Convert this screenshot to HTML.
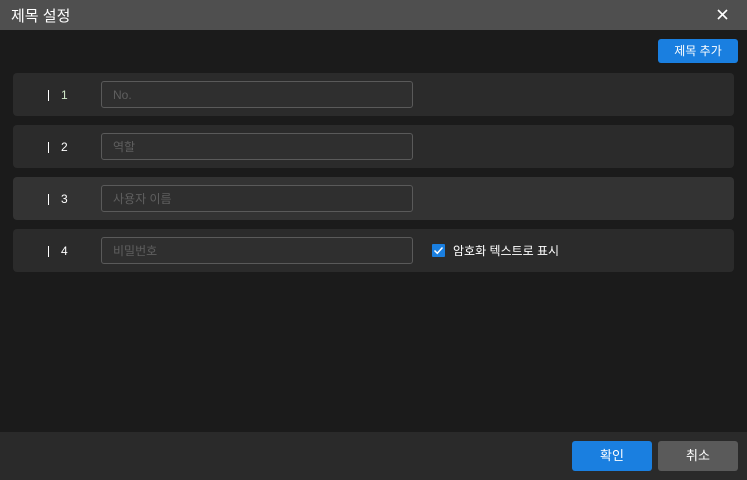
<!DOCTYPE html>
<html><head><meta charset="utf-8"><style>
*{margin:0;padding:0;box-sizing:border-box}
body{width:747px;height:480px;background:#1b1b1b;font-family:"Liberation Sans","Noto Sans CJK KR",sans-serif;position:relative;overflow:hidden;color:#fff}
.title{position:absolute;left:0;top:0;width:747px;height:30px;background:#4f4f4f}
.title span{position:absolute;left:11px;top:5px;font-size:15px;color:#fff}
.x{position:absolute;left:717px;top:9px}
.add{position:absolute;left:658px;top:39px;width:80px;height:24px;background:#1a7fe0;border-radius:3px;font-size:12px;text-align:center;line-height:24px}
.row{position:absolute;left:13px;width:721px;height:43px;background:#2b2b2b;border-radius:4px}
.row.hl{background:#333}
.bar{position:absolute;left:35px;top:17px;width:1px;height:11px;background:#fff}
.num{position:absolute;left:48px;top:15px;font-size:12px;color:#fff}
.inp{position:absolute;left:88px;top:8px;width:312px;height:27px;border:1px solid #5a5a5a;border-radius:3px;background:#2f2f2f;font-size:12px;color:#5f5f5f;padding-left:11px;line-height:27px}
.chk{position:absolute;left:419px;top:15px;width:13px;height:13px;background:#1a7fe0;border-radius:1px}
.lbl{position:absolute;left:440px;top:13px;font-size:12px}
.footer{position:absolute;left:0;top:432px;width:747px;height:48px;background:#2a2a2a}
.btn{position:absolute;top:441px;width:80px;height:30px;border-radius:3px;font-size:13px;text-align:center;line-height:30px}
</style></head><body>
<div class="title"><span>제목 설정</span>
<svg class="x" width="11" height="11" viewBox="0 0 11 11"><path d="M1 1L10 10M10 1L1 10" stroke="#fff" stroke-width="1.6"/></svg></div>
<div class="add">제목 추가</div>
<div class="row" style="top:73px"><div class="bar"></div><div class="num" style="color:#cfe8c8">1</div><div class="inp">No.</div></div>
<div class="row" style="top:125px"><div class="bar"></div><div class="num">2</div><div class="inp">역할</div></div>
<div class="row hl" style="top:177px"><div class="bar"></div><div class="num">3</div><div class="inp">사용자 이름</div></div>
<div class="row" style="top:229px"><div class="bar"></div><div class="num">4</div><div class="inp">비밀번호</div>
<div class="chk"><svg width="13" height="13" viewBox="0 0 13 13"><path d="M2.5 6.5L5.3 9.3L10.5 3.5" stroke="#fff" stroke-width="1.5" fill="none"/></svg></div>
<div class="lbl">암호화 텍스트로 표시</div></div>
<div class="footer"></div>
<div class="btn" style="left:572px;background:#1a7fe0">확인</div>
<div class="btn" style="left:658px;background:#5a5a5a">취소</div>
</body></html>
